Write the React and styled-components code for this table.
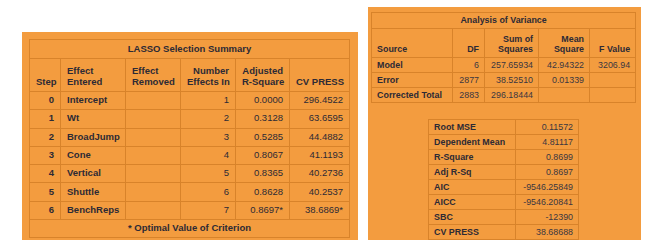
import React from 'react';
import styled, { createGlobalStyle } from 'styled-components';

const GlobalStyle = createGlobalStyle`
    html, body {
        margin: 0;
        padding: 0;
        background: #ffffff;
    }
    body {
        font-family: "Liberation Sans", Arial, sans-serif;
    }
`;

const orange = '#F39C3F';
const rule = '#D8832A';
const ink = '#2D2A35';

const Page = styled.div`
    display: flex;
    align-items: flex-end;
    gap: 10px;
    padding: 7px 0 0 22px;
    width: 655px;
    height: 249px;
    box-sizing: border-box;
    & > * {
        margin-bottom: 9px;
    }
`;

const Panel = styled.div`
    background: ${orange};
    box-sizing: border-box;
    padding: ${props => props.pad};
    height: ${props => props.h}px;
    display: flex;
    flex-direction: column;
    align-items: flex-start;
`;

const Table = styled.table`
    border-collapse: collapse;
    table-layout: fixed;
    color: ${ink};
    font-size: ${props => props.fs}px;
    border: 1px solid ${rule};
    margin: ${props => props.m || '0'};

    td, th {
        border: 1px solid ${rule};
        padding: 0 ${props => props.px || 5}px;
        white-space: nowrap;
        overflow: hidden;
        line-height: 1.15;
    }
    th {
        font-weight: bold;
        vertical-align: bottom;
        padding-bottom: 3px;
    }
`;

const Title = styled.th`
    && {
        text-align: center;
        vertical-align: middle;
        padding-bottom: 0;
        height: ${props => props.h}px;
    }
`;

const Head = styled.th`
    && {
        text-align: ${props => (props.right ? 'right' : 'left')};
        height: ${props => props.h}px;
    }
`;

const Row = styled.tr`
    height: ${props => props.h}px;
`;

const Cell = styled.td`
    text-align: ${props => (props.right ? 'right' : 'left')};
    font-weight: ${props => (props.bold ? 'bold' : 'normal')};
    color: ${props => (props.soft ? '#3b3740' : ink)};
`;

const Note = styled.td`
    && {
        text-align: center;
        font-weight: bold;
    }
`;

const lassoRows = [
    ['0', 'Intercept', '1', '0.0000', '296.4522'],
    ['1', 'Wt', '2', '0.3128', '63.6595'],
    ['2', 'BroadJump', '3', '0.5285', '44.4882'],
    ['3', 'Cone', '4', '0.8067', '41.1193'],
    ['4', 'Vertical', '5', '0.8365', '40.2736'],
    ['5', 'Shuttle', '6', '0.8628', '40.2537'],
    ['6', 'BenchReps', '7', '0.8697*', '38.6869*'],
];

const anovaRows = [
    ['Model', '6', '257.65934', '42.94322', '3206.94'],
    ['Error', '2877', '38.52510', '0.01339', ''],
    ['Corrected Total', '2883', '296.18444', '', ''],
];

const fitRows = [
    ['Root MSE', '0.11572'],
    ['Dependent Mean', '4.81117'],
    ['R-Square', '0.8699'],
    ['Adj R-Sq', '0.8697'],
    ['AIC', '-9546.25849'],
    ['AICC', '-9546.20841'],
    ['SBC', '-12390'],
    ['CV PRESS', '38.68688'],
];

function LassoSummary() {
    return (
        <Panel pad="7px 8px 8px 7px" h={208}>
            <Table fs={9.5} px={6} style={{ width: 320 }}>
                <colgroup>
                    <col style={{ width: 31 }} />
                    <col style={{ width: 65 }} />
                    <col style={{ width: 55 }} />
                    <col style={{ width: 55 }} />
                    <col style={{ width: 54 }} />
                    <col style={{ width: 60 }} />
                </colgroup>
                <thead>
                    <tr>
                        <Title colSpan={6} h={18}>LASSO Selection Summary</Title>
                    </tr>
                    <tr>
                        <Head h={29}>Step</Head>
                        <Head>Effect<br />Entered</Head>
                        <Head>Effect<br />Removed</Head>
                        <Head right>Number<br />Effects In</Head>
                        <Head right>Adjusted<br />R-Square</Head>
                        <Head right>CV PRESS</Head>
                    </tr>
                </thead>
                <tbody>
                    {lassoRows.map(r => (
                        <Row key={r[0]} h={18.3}>
                            <Cell right bold>{r[0]}</Cell>
                            <Cell bold>{r[1]}</Cell>
                            <Cell />
                            <Cell right>{r[2]}</Cell>
                            <Cell right>{r[3]}</Cell>
                            <Cell right>{r[4]}</Cell>
                        </Row>
                    ))}
                    <Row h={18}>
                        <Note colSpan={6}>* Optimal Value of Criterion</Note>
                    </Row>
                </tbody>
            </Table>
        </Panel>
    );
}

function AnovaPanel() {
    return (
        <Panel pad="5px 5px 0 3px" h={233}>
            <Table fs={8.9} px={5} style={{ width: 264 }}>
                <colgroup>
                    <col style={{ width: 81 }} />
                    <col style={{ width: 32 }} />
                    <col style={{ width: 54 }} />
                    <col style={{ width: 51 }} />
                    <col style={{ width: 46 }} />
                </colgroup>
                <thead>
                    <tr>
                        <Title colSpan={5} h={15}>Analysis of Variance</Title>
                    </tr>
                    <tr>
                        <Head h={25}>Source</Head>
                        <Head right>DF</Head>
                        <Head right>Sum of<br />Squares</Head>
                        <Head right>Mean<br />Square</Head>
                        <Head right>F Value</Head>
                    </tr>
                </thead>
                <tbody>
                    {anovaRows.map(r => (
                        <Row key={r[0]} h={15}>
                            <Cell bold>{r[0]}</Cell>
                            <Cell right soft>{r[1]}</Cell>
                            <Cell right soft>{r[2]}</Cell>
                            <Cell right soft>{r[3]}</Cell>
                            <Cell right soft>{r[4]}</Cell>
                        </Row>
                    ))}
                </tbody>
            </Table>
            <Table fs={8.9} px={5} m="16px 0 0 57px" style={{ width: 150 }}>
                <colgroup>
                    <col style={{ width: 87 }} />
                    <col style={{ width: 63 }} />
                </colgroup>
                <tbody>
                    {fitRows.map(r => (
                        <Row key={r[0]} h={15}>
                            <Cell bold>{r[0]}</Cell>
                            <Cell right soft>{r[1]}</Cell>
                        </Row>
                    ))}
                </tbody>
            </Table>
        </Panel>
    );
}

export default function App() {
    return (
        <>
            <GlobalStyle />
            <Page>
                <LassoSummary />
                <AnovaPanel />
            </Page>
        </>
    );
}
